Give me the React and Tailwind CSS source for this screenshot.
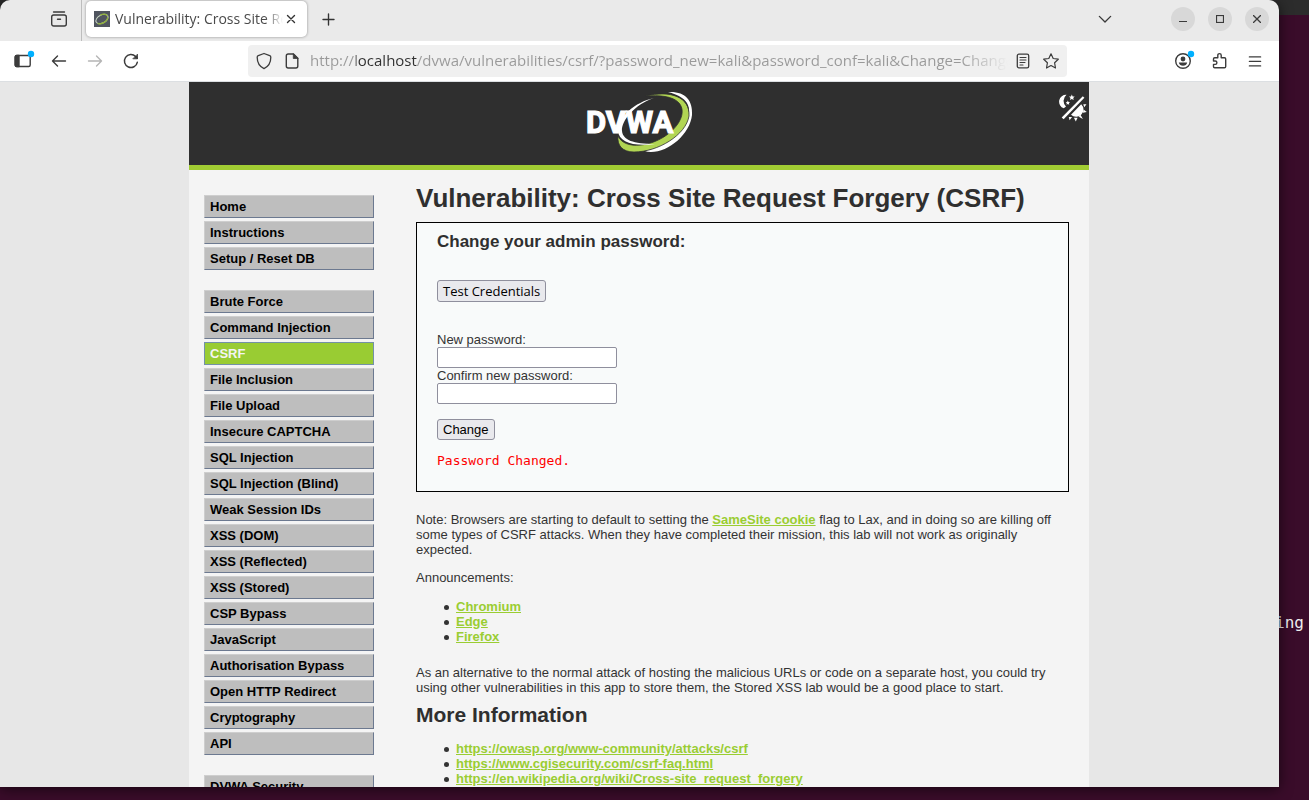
import React from "react";

const menuGroups = [
  ["Home", "Instructions", "Setup / Reset DB"],
  [
    "Brute Force",
    "Command Injection",
    "CSRF",
    "File Inclusion",
    "File Upload",
    "Insecure CAPTCHA",
    "SQL Injection",
    "SQL Injection (Blind)",
    "Weak Session IDs",
    "XSS (DOM)",
    "XSS (Reflected)",
    "XSS (Stored)",
    "CSP Bypass",
    "JavaScript",
    "Authorisation Bypass",
    "Open HTTP Redirect",
    "Cryptography",
    "API",
  ],
  ["DVWA Security"],
];

const announcements = ["Chromium", "Edge", "Firefox"];

const references = [
  "https://owasp.org/www-community/attacks/csrf",
  "https://www.cgisecurity.com/csrf-faq.html",
  "https://en.wikipedia.org/wiki/Cross-site_request_forgery",
];

function Icon({ size = 16, width = 1.3, children }) {
  return (
    <svg
      width={size}
      height={size}
      viewBox="0 0 16 16"
      fill="none"
      stroke="currentColor"
      strokeWidth={width}
      strokeLinecap="round"
      strokeLinejoin="round"
      className="shrink-0 overflow-visible"
      aria-hidden="true"
    >
      {children}
    </svg>
  );
}

function IconButton({ label, className = "", children }) {
  return (
    <button type="button" aria-label={label} className={`flex h-6 w-6 items-center justify-center ${className}`}>
      {children}
    </button>
  );
}

function Favicon() {
  return (
    <svg width="16" height="16" viewBox="0 0 16 16" className="shrink-0" aria-hidden="true">
      <rect width="16" height="16" fill="#50555f" />
      <g transform="rotate(-28 8 8)" fill="none">
        <ellipse cx="8" cy="8" rx="6.6" ry="4" stroke="#c9d6c4" strokeWidth="1" />
        <path d="M2.2 9.8C4.2 13 11.5 13 14 9.200" stroke="#8fb03a" strokeWidth="1.3" />
        <path d="M8 3.800c3 0 6 1.400 6.400 4.200" stroke="#8fb03a" strokeWidth="1.2" />
      </g>
    </svg>
  );
}

function TabBar() {
  return (
    <div className="flex h-[41px] shrink-0 items-stretch bg-[#eaeaea]">
      <div className="flex w-[82px] items-center justify-end border-r border-[#bdbdbd] pr-[10px] pb-[3px] text-[#3c3c3c]">
        <IconButton label="Recent browsing">
          <Icon width={1.4}>
            <path d="M2.500 1h11" />
            <rect x="0.700" y="4" width="14.600" height="11" rx="2" />
            <path d="M6.500 8.300h3" />
          </Icon>
        </IconButton>
      </div>
      <div className="ml-1 flex items-start">
        <div className="mt-px flex h-9 w-[221px] items-center rounded-[5px] bg-white pl-2 shadow-[0_0_3px_rgba(0,0,0,0.4)]">
          <Favicon />
          <span className="ml-[5px] w-[168px] overflow-hidden text-[14px] leading-5 whitespace-nowrap text-[#4a4a4a] [mask-image:linear-gradient(to_right,#000_150px,transparent_168px)]">
            Vulnerability: Cross Site Request
          </span>
          <button type="button" aria-label="Close tab" className="flex h-4 w-4 items-center justify-center text-[#333]">
            <Icon size={8} width={2.8}>
              <path d="M1 1l14 14M15 1L1 15" />
            </Icon>
          </button>
        </div>
      </div>
      <div className="flex items-center pb-[3px] pl-[9px] text-[#333]">
        <IconButton label="New tab">
          <Icon size={11} width={2}>
            <path d="M8 0v16M0 8h16" />
          </Icon>
        </IconButton>
      </div>
      <div className="ml-auto flex items-center pr-[10px] pb-[3px] text-[#3a3a3a]">
        <IconButton label="List all tabs" className="mr-[54px]">
          <Icon size={12} width={1.8}>
            <path d="M0.500 4.500L8 12l7.500-7.500" />
          </Icon>
        </IconButton>
        <div className="flex gap-[13px]">
          <IconButton label="Minimise" className="rounded-full bg-[#d8d8d8]">
            <svg width="8" height="8" viewBox="0 0 8 8" aria-hidden="true">
              <path d="M0 6.500h8" stroke="currentColor" />
            </svg>
          </IconButton>
          <IconButton label="Maximise" className="rounded-full bg-[#d8d8d8]">
            <svg width="8" height="8" viewBox="0 0 8 8" aria-hidden="true">
              <rect x="0.500" y="0.500" width="7" height="7" fill="none" stroke="currentColor" strokeWidth="1.2" />
            </svg>
          </IconButton>
          <IconButton label="Close window" className="rounded-full bg-[#d8d8d8]">
            <svg width="8" height="8" viewBox="0 0 8 8" aria-hidden="true">
              <path d="M0 0l8 8M8 0L0 8" stroke="currentColor" strokeWidth="1.3" />
            </svg>
          </IconButton>
        </div>
      </div>
    </div>
  );
}

function Toolbar() {
  return (
    <div className="flex h-10 shrink-0 items-center bg-white text-[#3c3c3c]">
      <div className="flex shrink-0 items-center gap-3 pl-[11px]">
        <IconButton label="Show sidebar">
          <Icon width={1.4}>
            <rect x="0.200" y="2.500" width="15" height="11" rx="1.500" />
            <path d="M0.200 4a1.500 1.500 0 0 1 1.500-1.500H4v11H1.700a1.500 1.500 0 0 1-1.500-1.500z" fill="currentColor" />
            <circle cx="16" cy="1" r="3.200" fill="#00b0ff" stroke="none" />
          </Icon>
        </IconButton>
        <IconButton label="Back">
          <Icon width={1.4}>
            <path d="M14.500 8H1.500M6.500 3L1.500 8l5 5" />
          </Icon>
        </IconButton>
        <IconButton label="Forward" className="text-[#b5b5b5]">
          <Icon width={1.4}>
            <path d="M1.500 8h13M9.500 3l5 5-5 5" />
          </Icon>
        </IconButton>
        <IconButton label="Reload">
          <Icon width={1.5}>
            <path d="M14.300 9.300A6.500 6.500 0 1 1 12.600 3.500L14.200 5.100" />
            <path d="M14.500 1.500v4.300h-4.300z" fill="currentColor" strokeWidth="0.8" />
          </Icon>
        </IconButton>
      </div>
      <div className="ml-[105px] flex h-8 min-w-0 flex-1 items-center rounded-[4px] bg-[#f0f0f0] px-1">
        <IconButton label="Tracking protection">
          <Icon width={1.3}>
            <path d="M8 0.500l5.700 2.200q1.100.4 1.100 1.600C14.800 9 12.600 13.500 8 15.600 3.400 13.500 1.200 9 1.200 4.300q0-1.200 1.100-1.600z" />
          </Icon>
        </IconButton>
        <IconButton label="Site information" className="ml-1">
          <Icon width={1.4}>
            <path d="M9.500 1H4.200Q2.300 1 2.300 2.900v10.200q0 1.900 1.900 1.900h7.700q1.900 0 1.900-1.900V5.300z" />
            <path d="M9.300 1v4.500h4.500z" fill="currentColor" strokeWidth="0.8" />
          </Icon>
        </IconButton>
        <input
          type="text"
          aria-label="Address"
          defaultValue="http://localhost/dvwa/vulnerabilities/csrf/?password_new=kali&password_conf=kali&Change=Change#"
          className="ml-[6px] h-6 min-w-0 flex-1 bg-[linear-gradient(to_right,#999_46px,#303030_46px,#303030_107px,#999_107px,#999_650px,#f0f0f0_698px)] bg-clip-text pb-[2px] text-[15px] text-transparent outline-none"
        />
        <IconButton label="Reader view">
          <Icon width={1.3}>
            <rect x="2.300" y="1.200" width="11.400" height="13.600" rx="1.600" />
            <path d="M5 4.500h6M5 7h6M5 9.500h5M5 12h3" strokeWidth="1.100" />
          </Icon>
        </IconButton>
        <IconButton label="Bookmark" className="ml-1">
          <Icon width={1.2}>
            <path d="M8 .8l2.200 4.700 5.100.7-3.700 3.600.9 5.200L8 12.500 3.500 15l.9-5.200L.7 6.200l5.100-.7z" />
          </Icon>
        </IconButton>
      </div>
      <div className="ml-[104px] flex shrink-0 items-center gap-3 pr-3">
        <IconButton label="Account">
          <Icon width={1.400}>
            <circle cx="8" cy="8" r="7.300" />
            <circle cx="8" cy="6" r="2.400" fill="currentColor" stroke="none" />
            <path d="M3.800 9.600h8.400q-.8 3.200-4.200 3.200T3.800 9.600z" fill="currentColor" stroke="none" />
            <circle cx="16" cy="1" r="3.200" fill="#00b0ff" stroke="none" />
          </Icon>
        </IconButton>
        <IconButton label="Extensions">
          <Icon width={1.400}>
            <path d="M3.700 4.800h3.100V2.300a1.700 1.700 0 0 1 3.400 0v2.500h3.300q1.200 0 1.200 1.200v7.600q0 1.200-1.200 1.200H3.700q-1.200 0-1.200-1.200v-2.200h1.700a1.700 1.700 0 0 0 0-3.400H2.500V6q0-1.200 1.200-1.200z" />
          </Icon>
        </IconButton>
        <IconButton label="Application menu">
          <Icon size={12} width={1.700}>
            <path d="M0.500 2.500h15M0.500 8.500h15M0.500 14.500h15" />
          </Icon>
        </IconButton>
      </div>
    </div>
  );
}

function Logo() {
  return (
    <svg width="110" height="64" viewBox="0 0 110 64" role="img" aria-label="DVWA" className="ml-[6px] overflow-visible">
      <path d="M81 1C98 0 106 9 105 24 103 43 82 61 64 61q-4 0-6-1C77 55 94 43 101 25 105 13 97 5 81 1z" fill="#fff" />
      <path d="M58 5C84-1 103 6 102 25 99 44 71 61 47 61 35 61 30 54 31 45 38 60 66 55 81 43 94 33 99 20 92 12 86 5 72 4 58 5z" fill="#b1d553" stroke="#2f2f2f" strokeWidth="0.8" />
      <path d="M67 7C48 13 34 30 35 40c1 9 11 13 33 13-22 3-36-2-37-13C31 26 48 11 67 7z" fill="#fff" />
      <text x="-1" y="42" fill="#fff" stroke="#fff" strokeWidth="1.2" className="font-['Roboto','Liberation_Sans',sans-serif] text-[31px] font-bold">
        DVWA
      </text>
    </svg>
  );
}

function ThemeIcon() {
  return (
    <svg width="28" height="28" viewBox="0 0 28 28" fill="#fff" aria-hidden="true">
      <path d="M7.500 .7A7 7 0 0 0 4.800 14.300L7 12.600A8 8 0 0 1 7.500 .7z" />
      <path d="M12.800 .5l.9 1.900 2 .2-1.500 1.400.5 2-1.900-1-1.800 1 .5-2L10 2.600l2-.2z" />
      <path d="M8.800 6.600l.7 1.400 1.500.2-1.100 1 .3 1.500-1.400-.7-1.300.7.300-1.500-1.100-1 1.500-.2z" />
      <path d="M23.800 2.300l1.600 1.500L4.600 25.200l-1.900-1.700z" />
      <path d="M22.200 10.200a7 7 0 0 1-10.200 10.600z" />
      <path d="M24.300 10.300h3.200l-2.300 2.900zM24.500 15.600l3.300 2.300-3.900.9zM21.500 20.700l2.400 4.200-4.100-2.200zM14.900 23.700h3.700L16.800 27.500zM9.800 23h3.300l-2.500 3.200z" />
    </svg>
  );
}

function SideMenu() {
  return (
    <nav aria-label="Main menu" className="w-[170px] shrink-0 space-y-5 pt-[25px]">
      {menuGroups.map((group) => (
        <ul key={group[0]} className="space-y-[3px]">
          {group.map((item) => (
            <li key={item}>
              <a
                href="#"
                aria-current={item === "CSRF" ? "page" : undefined}
                className={`block h-[23px] border pl-[5px] text-[13px] leading-[21px] font-bold ${
                  item === "CSRF"
                    ? "border-[#7391a8] bg-[#99cc33] text-[#f4f4f4]"
                    : "border-t-[#cecece] border-r-[#6c7990] border-b-[#6c7990] border-l-[#cecece] bg-[#bebebe] text-black"
                }`}
              >
                {item}
              </a>
            </li>
          ))}
        </ul>
      ))}
    </nav>
  );
}

function GreenLink({ children }) {
  return (
    <a href="#" className="font-bold text-[#9acd32] underline">
      {children}
    </a>
  );
}

function LinkList({ items }) {
  return (
    <ul className="pl-7">
      {items.map((item) => (
        <li
          key={item}
          className="flex items-center gap-[7px] before:mt-px before:size-[5px] before:rounded-full before:bg-[#333] before:content-['']"
        >
          <GreenLink>{item}</GreenLink>
        </li>
      ))}
    </ul>
  );
}

function PasswordForm() {
  const field = "block h-[21px] w-[180px] rounded-[2px] border border-[#8f8f9d] bg-white px-1 outline-none";
  const button = "rounded-[3px] border border-[#8f8f9d] bg-[#e9e9ed] px-[5px] text-black";
  return (
    <form className="mt-[9px] border border-black bg-[#f8fafa] px-5 pt-[9px] pb-[23px]" onSubmit={(e) => e.preventDefault()}>
      <h3 className="text-[17px] leading-5 font-bold text-[#2f2f2f]">Change your admin password:</h3>
      <button type="button" className={`mt-[28px] block h-[22px] font-['Open_Sans','Noto_Sans',sans-serif] text-[13px] leading-5 ${button}`}>
        Test Credentials
      </button>
      <label htmlFor="password-new" className="mt-[30px] block">
        New password:
      </label>
      <input id="password-new" type="password" className={field} />
      <label htmlFor="password-conf" className="block">
        Confirm new password:
      </label>
      <input id="password-conf" type="password" className={field} />
      <button type="submit" className={`mt-[15px] block h-[21px] leading-[19px] ${button}`}>
        Change
      </button>
      <p className="mt-[13px] font-['DejaVu_Sans_Mono',monospace] text-[#ff0000]">Password Changed.</p>
    </form>
  );
}

function Page() {
  return (
    <div className="min-h-0 flex-1 overflow-hidden border-t border-[#dcdfe2] bg-[#e7e7e7] pr-px font-['Liberation_Sans',Arial,sans-serif]">
      <div className="mx-auto w-full max-w-[900px] bg-[#f4f4f4]">
        <header className="relative flex h-[88px] justify-center border-b-[5px] border-[#a1cc33] bg-[#2f2f2f] pt-[9px]">
          <Logo />
          <button type="button" aria-label="Toggle theme" className="absolute top-[12px] right-[2px]">
            <ThemeIcon />
          </button>
        </header>
        <div className="flex gap-[42px] pr-5 pl-[15px]">
          <SideMenu />
          <main className="min-w-0 flex-1 pt-[13px] text-[13px] leading-[15px] text-[#333]">
            <h1 className="text-[26px] leading-[30px] font-bold text-[#2f2f2f]">
              Vulnerability: Cross Site Request Forgery (CSRF)
            </h1>
            <PasswordForm />
            <p className="mt-5">
              Note: Browsers are starting to default to setting the <GreenLink>SameSite cookie</GreenLink> flag to Lax, and
              in doing so are killing off some types of CSRF attacks. When they have completed their mission, this lab will
              not work as originally expected.
            </p>
            <p className="my-[13px]">Announcements:</p>
            <div className="pt-px">
              <LinkList items={announcements} />
            </div>
            <p className="mt-[21px]">
              As an alternative to the normal attack of hosting the malicious URLs or code on a separate host, you could try
              using other vulnerabilities in this app to store them, the Stored XSS lab would be a good place to start.
            </p>
            <h2 className="mt-2 mb-[14px] text-[21px] leading-6 font-bold text-[#2f2f2f]">More Information</h2>
            <LinkList items={references} />
          </main>
        </div>
      </div>
    </div>
  );
}

export default function App() {
  return (
    <div className="relative h-screen overflow-hidden bg-[#3a0c2a] pr-[30px] pb-[13px]">
      <div className="absolute top-0 right-0 h-[15px] w-full bg-[#2c2c2c]" />
      <span className="absolute top-[613px] right-[5px] font-['DejaVu_Sans_Mono',monospace] text-[16px] leading-5 text-[#eeeeee]">
        ing
      </span>
      <div className="relative flex h-full flex-col overflow-hidden rounded-t-[10px] font-['Open_Sans','Noto_Sans',sans-serif] shadow-[0_2px_14px_rgba(0,0,0,0.6)]">
        <TabBar />
        <Toolbar />
        <Page />
      </div>
    </div>
  );
}
